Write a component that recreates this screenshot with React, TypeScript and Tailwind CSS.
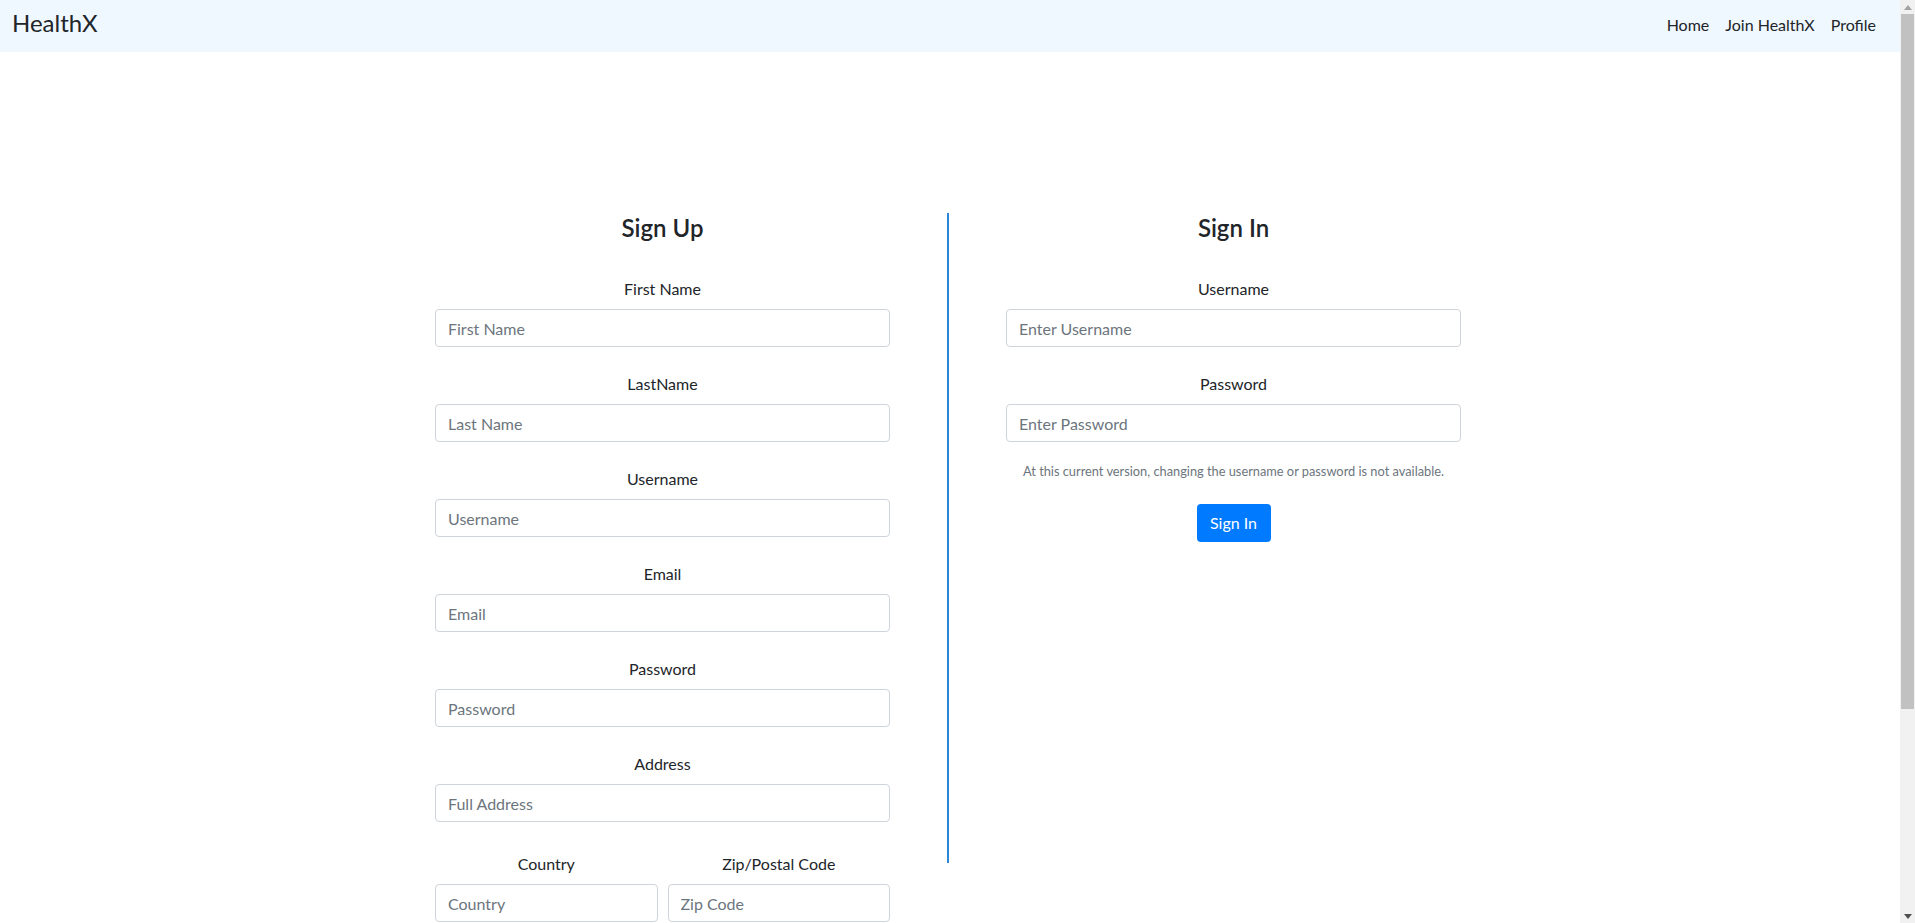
import React from "react";

const font = { fontFamily: "Lato, 'Liberation Sans', sans-serif" };

type FieldProps = {
  label: string;
  placeholder: string;
  type?: string;
};

const Field = ({ label, placeholder, type = "text" }: FieldProps) => {
  return (
    <div className="flex flex-col">
      <label className="text-center text-[16px] leading-[24px] text-[#212529] mb-2">
        {label}
      </label>
      <input
        type={type}
        placeholder={placeholder}
        className="h-[38px] w-full rounded border border-[#ced4da] bg-white px-3 text-[16px] text-[#495057] placeholder:text-[#6c757d] outline-none"
      />
    </div>
  );
};

const Navbar = () => {
  return (
    <nav className="flex h-[52px] items-center justify-between bg-[#f0f8ff] pl-3 pr-4">
      <a href="#" className="mb-[6px] text-[24px] leading-[36px] text-[#212529]">
        HealthX
      </a>
      <ul className="flex items-center pb-[2px]">
        {["Home", "Join HealthX", "Profile"].map((link) => (
          <li key={link}>
            <a href="#" className="block px-2 text-[16px] leading-[24px] text-[#212529]">
              {link}
            </a>
          </li>
        ))}
      </ul>
    </nav>
  );
};

const SignUp = () => {
  const fields = [
    { label: "First Name", placeholder: "First Name" },
    { label: "LastName", placeholder: "Last Name" },
    { label: "Username", placeholder: "Username" },
    { label: "Email", placeholder: "Email", type: "email" },
    { label: "Password", placeholder: "Password", type: "password" },
    { label: "Address", placeholder: "Full Address" },
  ];

  return (
    <div className="w-[455px] shrink-0">
      <h4 className="text-center text-[24px] leading-[29px] font-semibold text-[#212529]">
        Sign Up
      </h4>
      <form className="mt-[35px] flex flex-col gap-[25px]">
        {fields.map((field) => (
          <Field key={field.label} {...field} />
        ))}
        {/* Country + zip row */}
        <div className="mt-[5px] grid grid-cols-2 gap-[10px]">
          <Field label="Country" placeholder="Country" />
          <Field label="Zip/Postal Code" placeholder="Zip Code" />
        </div>
        <div className="flex justify-center">
          <button
            type="button"
            className="h-[38px] rounded bg-[#007bff] px-3 text-[16px] text-white"
          >
            Sign Up
          </button>
        </div>
      </form>
    </div>
  );
};

const SignIn = () => {
  return (
    <div className="w-[455px] shrink-0">
      <h4 className="text-center text-[24px] leading-[29px] font-semibold text-[#212529]">
        Sign In
      </h4>
      <form className="mt-[35px] flex flex-col">
        <div className="flex flex-col gap-[25px]">
          <Field label="Username" placeholder="Enter Username" />
          <Field label="Password" placeholder="Enter Password" type="password" />
        </div>
        <p className="mt-[20px] text-center text-[12.8px] leading-[19px] text-[#6c757d]">
          At this current version, changing the username or password is not available.
        </p>
        <div className="mt-[23px] flex justify-center">
          <button
            type="button"
            className="h-[38px] w-[74px] rounded bg-[#007bff] text-[16px] text-white"
          >
            Sign In
          </button>
        </div>
      </form>
    </div>
  );
};

// page scrollbar as it shows in the screenshot
const Scrollbar = () => {
  return (
    <div className="flex h-full w-[15px] shrink-0 flex-col bg-[#f1f1f1]">
      <div className="flex h-[14px] items-center justify-center">
        <svg width="8" height="5" viewBox="0 0 8 5">
          <path d="M4 0 L8 5 L0 5 Z" fill="#a3a3a3" />
        </svg>
      </div>
      <div className="mx-[1px] h-[695px] bg-[#c1c1c1]" />
      <div className="flex-1" />
      <div className="flex h-[14px] items-center justify-center">
        <svg width="8" height="5" viewBox="0 0 8 5">
          <path d="M0 0 L8 0 L4 5 Z" fill="#505050" />
        </svg>
      </div>
    </div>
  );
};

export default function App() {
  return (
    <div className="flex h-screen overflow-hidden bg-white" style={font}>
      <div className="min-w-0 flex-1 overflow-hidden">
        <Navbar />
        <main className="flex justify-center gap-[57px] pt-[161px] pr-[4px] pb-[150px]">
          <SignUp />
          <div className="h-[650px] w-[2px] shrink-0 bg-[#2a87d8]" />
          <SignIn />
        </main>
      </div>
      <Scrollbar />
    </div>
  );
}
